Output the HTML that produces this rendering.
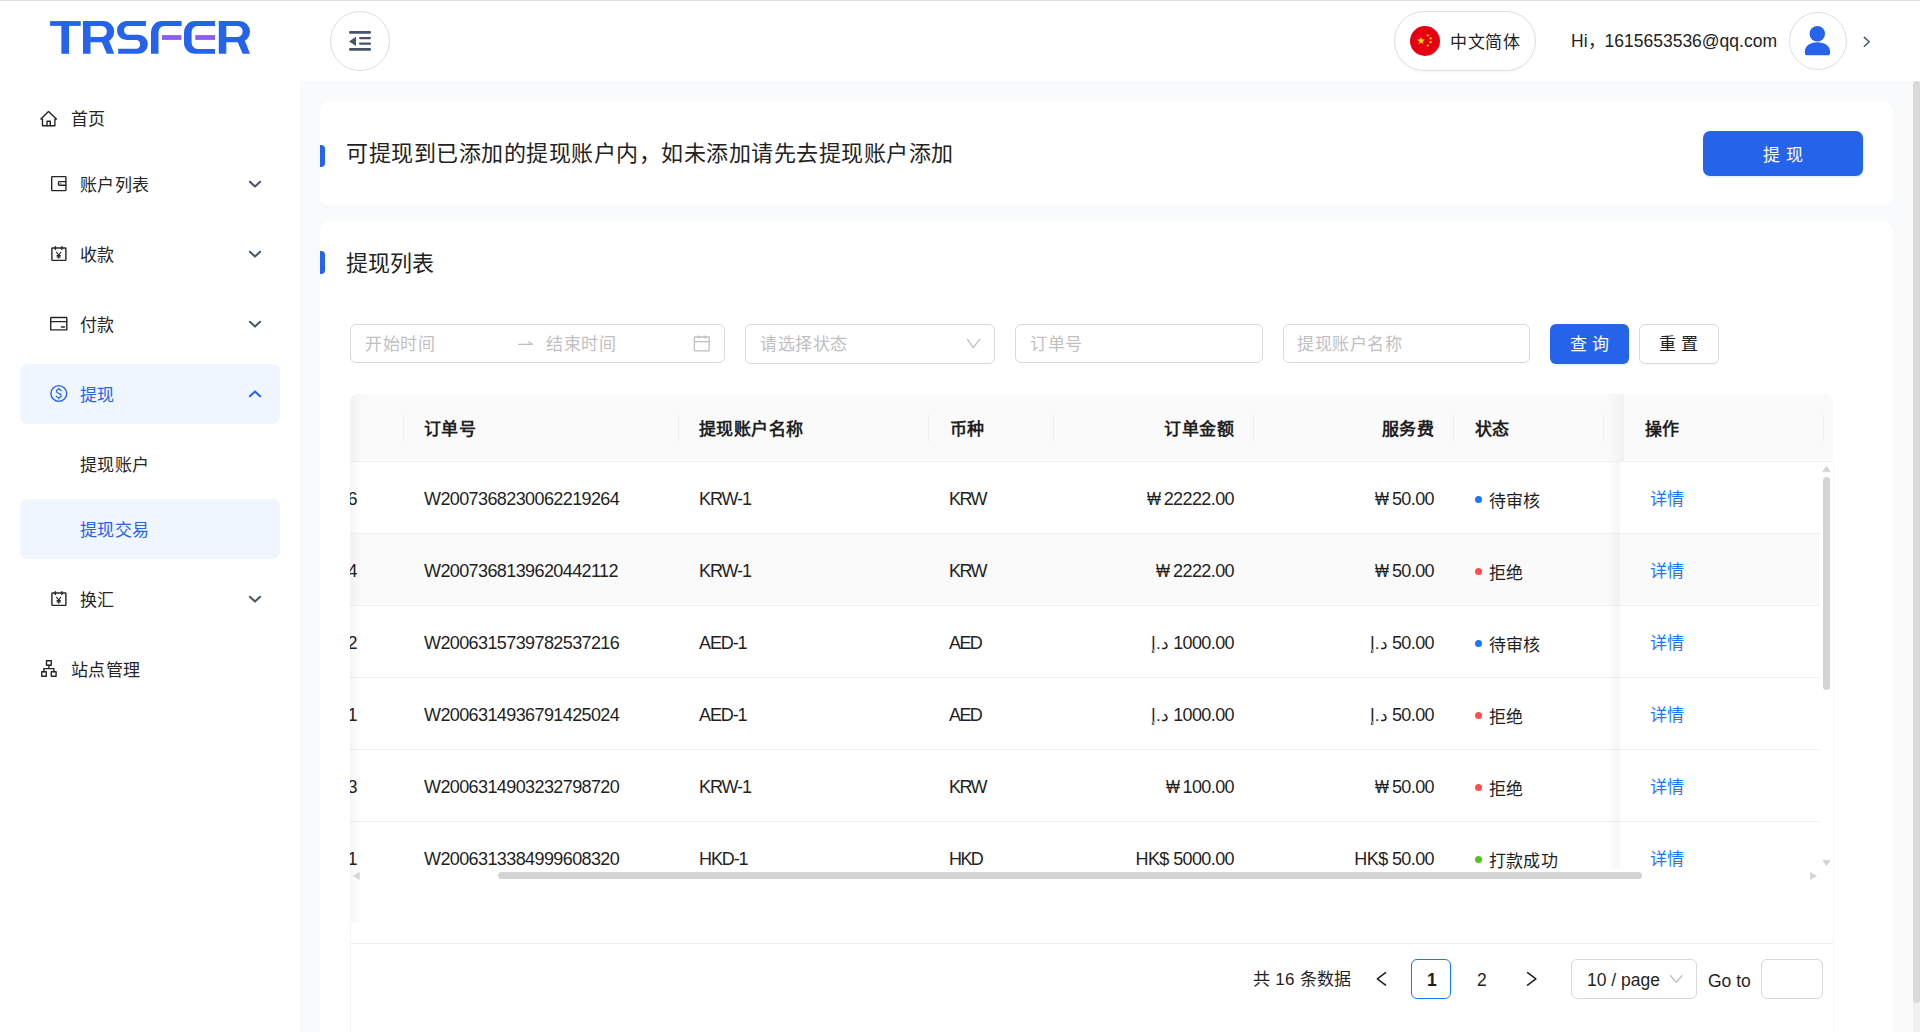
<!DOCTYPE html>
<html lang="zh-CN">
<head>
<meta charset="utf-8">
<title>TRSFER</title>
<style>
*{box-sizing:border-box;margin:0;padding:0}
html,body{width:1920px;height:1032px;overflow:hidden;background:#fff}
body{position:relative;font-family:"Liberation Sans",sans-serif;color:#1f1f1f}
.abs{position:absolute}
.t{position:absolute;white-space:nowrap;line-height:1}
.th{letter-spacing:0.4px;font-size:17px;font-weight:bold;color:#1f1f1f}
.td{font-size:18px;letter-spacing:-0.6px;color:#1f1f1f}
.w{display:inline-block;letter-spacing:0;transform:scaleX(0.82);transform-origin:right center;margin-right:-1.5px}
.ar{font-size:17px;letter-spacing:0;unicode-bidi:isolate;display:inline-block}
.num{display:inline-block}
.tc{font-size:17px;letter-spacing:0.2px;color:#1f1f1f}
</style>
</head>
<body>
<!-- top line -->
<div class="abs" style="left:0;top:0;width:1920px;height:1px;background:#dfe1dd"></div>

<!-- logo -->
<svg class="abs" style="left:0;top:0" width="300" height="80" viewBox="0 0 300 80">
  <g fill="#2563eb">
    <rect x="50.1" y="21.1" width="30.6" height="4.8"/>
    <rect x="61.4" y="21.1" width="7.6" height="32.7"/>
    <path fill-rule="evenodd" d="M83,21.1 H103.7 A10.5,10.6 0 0 1 103.7,42.3 H90.5 V53.8 H83 Z M90.5,25.9 H102 A4.8,5.55 0 0 1 102,37 H90.5 Z"/>
    <path d="M101.8,42 L109,40.5 L114.2,53.8 L106.8,53.8 Z"/>
    <path d="M145.9,21.1 H126.5 A9.5,9.4 0 0 0 126.5,39.9 H136.3 A3.9,4.45 0 0 1 136.3,48.8 H118.2 V53.8 H138.5 A9.3,9.5 0 0 0 138.5,34.8 H128 A4,4.45 0 0 1 128,25.9 H145.9 Z"/>
    <path d="M151,53.8 V32.4 A10.7,11.3 0 0 1 161.7,21.1 H181.6 V25.9 H164.2 A5.7,6.5 0 0 0 158.5,32.4 V53.8 Z"/>
    <path d="M215,21.1 H194.7 A10.7,11.3 0 0 0 184,32.4 V42.5 A10.7,11.3 0 0 0 194.7,53.8 H215 V49 H197.3 A5.7,6.5 0 0 1 191.6,42.5 V32.4 A5.7,6.5 0 0 1 197.3,25.9 H215 Z"/>
    <g transform="translate(135.8,0)">
    <path fill-rule="evenodd" d="M83,21.1 H103.7 A10.5,10.6 0 0 1 103.7,42.3 H90.5 V53.8 H83 Z M90.5,25.9 H102 A4.8,5.55 0 0 1 102,37 H90.5 Z"/>
    <path d="M101.8,42 L109,40.5 L114.2,53.8 L106.8,53.8 Z"/>
    </g>
  </g>
  <g fill="#8b5cf6">
    <rect x="162" y="35.1" width="19.4" height="4.8"/>
    <rect x="195.3" y="35.1" width="19.7" height="4.8"/>
  </g>
</svg>

<!-- collapse button -->
<div class="abs" style="left:330px;top:11px;width:60px;height:60px;border:1px solid #d8e0e8;border-radius:50%"></div>
<svg class="abs" style="left:330px;top:11px" width="60" height="60" viewBox="0 0 60 60">
  <g fill="#475569">
    <rect x="19" y="20" width="22" height="2.7" rx="1.3"/>
    <rect x="29" y="26" width="12" height="2.2" rx="1.1"/>
    <rect x="29" y="31.6" width="12" height="2.2" rx="1.1"/>
    <rect x="19" y="37" width="22" height="2.7" rx="1.3"/>
    <path d="M19,30.4 L26,25.8 L26,35 Z"/>
  </g>
</svg>

<!-- language pill -->
<div class="abs" style="left:1394px;top:11px;width:142px;height:60px;border:1px solid #d8e0e8;border-radius:30px;box-shadow:0 2px 3px rgba(0,0,0,0.03)"></div>
<svg class="abs" style="left:1410px;top:26px" width="30" height="30" viewBox="0 0 30 30">
  <circle cx="15" cy="15" r="15" fill="#e60012"/>
  <path fill="#ffde00" d="M10.9,10.7 L11.9,13.5 L14.9,13.6 L12.5,15.4 L13.4,18.3 L10.9,16.6 L8.4,18.3 L9.3,15.4 L6.9,13.6 L9.9,13.5 Z"/>
  <circle cx="17.8" cy="9.4" r="1.1" fill="#ffde00"/>
  <circle cx="20.6" cy="12.4" r="1.1" fill="#ffde00"/>
  <circle cx="20.6" cy="16.2" r="1.1" fill="#ffde00"/>
  <circle cx="17.8" cy="19.6" r="1.1" fill="#ffde00"/>
</svg>
<div class="t" style="left:1450px;top:34px;font-size:17px;letter-spacing:0.5px;color:#222">中文简体</div>

<!-- user -->
<div class="t" style="left:1571px;top:32.8px;font-size:17.5px;color:#222">Hi，1615653536@qq.com</div>
<div class="abs" style="left:1789px;top:12px;width:58px;height:58px;border:1px solid #d8e0e8;border-radius:50%"></div>
<svg class="abs" style="left:1789px;top:12px" width="58" height="58" viewBox="0 0 58 58">
  <circle cx="28.3" cy="21.7" r="7.7" fill="#2563eb"/>
  <path fill="#2563eb" d="M15.8,40 C15.8,33.6 21.3,30.2 28.4,30.2 C35.5,30.2 41.1,33.6 41.1,40 L41.1,41 C41.1,42.4 40,43.3 38.6,43.3 L18.3,43.3 C16.9,43.3 15.8,42.4 15.8,41 Z"/>
</svg>
<svg class="abs" style="left:1860px;top:34px" width="14" height="14" viewBox="0 0 14 14">
  <path d="M4.3,3.4 L9.2,7.8 L4.3,12.2" fill="none" stroke="#475569" stroke-width="1.5" stroke-linecap="round" stroke-linejoin="round"/>
</svg>

<!-- SIDEBAR placeholder -->

<svg class="abs" style="left:0;top:81px" width="300" height="620" viewBox="0 81 300 620">
  <g fill="none" stroke="#262626" stroke-width="1.4" stroke-linejoin="round" stroke-linecap="round">
    <!-- home -->
    <path d="M40.9,119.1 L48.5,111.4 L56.4,119.1 L54.9,119.1 L54.9,125.7 L42.5,125.7 L42.5,119.1 Z"/>
    <path d="M47,125.7 V121.2 H50.3 V125.7"/>
    <!-- wallet -->
    <rect x="51.7" y="176.6" width="14.2" height="14" rx="0.6"/>
    <path d="M65.9,181.6 H59.3 Q58.5,181.6 58.5,182.4 V184.6 Q58.5,185.3 59.3,185.3 H65.9"/>
    <circle cx="60.8" cy="183.4" r="0.5" fill="#262626" stroke="none"/>
    <!-- calendar yen 1 -->
    <rect x="51.9" y="248" width="14" height="12.4" rx="0.6"/>
    <path d="M55.4,246.6 V249.4 M61.9,246.6 V249.4"/>
    <path d="M56.6,252.3 L58.7,255 L60.8,252.3 M58.7,255 V258.3 M57,255.6 H60.4 M57,257 H60.4" stroke-width="1.1"/>
    <!-- card -->
    <rect x="50.7" y="317.5" width="16.1" height="12.4" rx="0.5"/>
    <path d="M50.7,321.6 H66.8"/>
    <path d="M61.5,327 H64.5" stroke-width="1.3"/>
    <!-- calendar yen 2 -->
    <rect x="51.9" y="593" width="14" height="12.4" rx="0.6"/>
    <path d="M55.4,591.6 V594.4 M61.9,591.6 V594.4"/>
    <path d="M56.6,597.3 L58.7,600 L60.8,597.3 M58.7,600 V603.3 M57,600.6 H60.4 M57,602 H60.4" stroke-width="1.1"/>
    <!-- sitemap -->
    <rect x="46.5" y="660.7" width="4.8" height="4.6"/>
    <rect x="41.7" y="671.8" width="4.6" height="4.4"/>
    <rect x="51.3" y="671.8" width="4.8" height="4.4"/>
    <path d="M48.9,665.3 V668.6 M43.9,671.8 V668.6 H53.9 V671.8"/>
  </g>
  <!-- chevrons -->
  <g fill="none" stroke="#475569" stroke-width="2" stroke-linecap="round" stroke-linejoin="round">
    <path d="M249.9,181.8 L255,186.6 L260.1,181.8"/>
    <path d="M249.9,251.8 L255,256.6 L260.1,251.8"/>
    <path d="M249.9,321.8 L255,326.6 L260.1,321.8"/>
    <path d="M249.9,596.8 L255,601.6 L260.1,596.8"/>
  </g>
</svg>
<div class="abs" style="left:20px;top:364px;width:260px;height:60px;background:#eff6ff;border-radius:8px"></div>
<div class="abs" style="left:20px;top:499px;width:260px;height:60px;background:#eff6ff;border-radius:8px"></div>
<svg class="abs" style="left:0;top:360px" width="300" height="70" viewBox="0 360 300 70">
  <g fill="none" stroke="#2563eb" stroke-width="1.4" stroke-linecap="round" stroke-linejoin="round">
    <circle cx="58.8" cy="393.5" r="7.9"/>
    <path d="M61,390.6 Q60.3,389.3 58.8,389.3 Q56.5,389.3 56.5,391.2 Q56.5,392.8 58.8,393.3 Q61.2,393.9 61.2,395.6 Q61.2,397.5 58.8,397.5 Q57,397.5 56.3,396.2 M58.8,388 V389.3 M58.8,397.5 V398.9" stroke-width="1.2"/>
    <path d="M249.9,396.2 L255,391.4 L260.1,396.2" stroke-width="2"/>
  </g>
</svg>
<div class="t" style="left:71px;top:111px;font-size:17px;letter-spacing:0.4px;color:#262626">首页</div>
<div class="t" style="left:80px;top:177px;font-size:17px;letter-spacing:0.4px;color:#262626">账户列表</div>
<div class="t" style="left:80px;top:247px;font-size:17px;letter-spacing:0.4px;color:#262626">收款</div>
<div class="t" style="left:80px;top:317px;font-size:17px;letter-spacing:0.4px;color:#262626">付款</div>
<div class="t" style="left:80px;top:387px;font-size:17px;letter-spacing:0.4px;color:#2563eb">提现</div>
<div class="t" style="left:80px;top:457px;font-size:17px;letter-spacing:0.4px;color:#262626">提现账户</div>
<div class="t" style="left:80px;top:522px;font-size:17px;letter-spacing:0.4px;color:#2563eb">提现交易</div>
<div class="t" style="left:80px;top:592px;font-size:17px;letter-spacing:0.4px;color:#262626">换汇</div>
<div class="t" style="left:71px;top:662px;font-size:17px;letter-spacing:0.4px;color:#262626">站点管理</div>


<!-- MAIN -->
<div class="abs" style="left:300px;top:81px;width:1613px;height:951px;background:#f9fafb"></div>
<div class="abs" style="left:1913px;top:81px;width:7px;height:951px;background:#f1f1f1"></div>
<div class="abs" style="left:1913px;top:81px;width:7px;height:922px;background:#d9d9d9;border-radius:4px"></div>

<!-- card 1 -->
<div class="abs" style="left:320px;top:101px;width:1573px;height:105px;background:#fff;border-radius:10px"></div>
<div class="abs" style="left:320px;top:145px;width:5px;height:22px;background:#2563eb;border-radius:0 4px 4px 0"></div>
<div class="t" style="left:346px;top:143px;font-size:22px;letter-spacing:0.5px;color:#222">可提现到已添加的提现账户内，如未添加请先去提现账户添加</div>
<div class="abs" style="left:1703px;top:131px;width:160px;height:45px;background:#2563eb;border-radius:7px;box-shadow:0 2px 0 rgba(5,145,255,0.1)"></div>
<div class="t" style="left:1763px;top:146.5px;font-size:17px;color:#fff;letter-spacing:6px">提现</div>

<!-- card 2 -->
<div class="abs" style="left:320px;top:221px;width:1573px;height:830px;background:#fff;border-radius:10px"></div>
<div class="abs" style="left:320px;top:251px;width:5px;height:23px;background:#2563eb;border-radius:0 4px 4px 0"></div>
<div class="t" style="left:346px;top:253px;font-size:22px;color:#222">提现列表</div>


<!-- filters -->
<div class="abs" style="left:350px;top:324px;width:375px;height:39px;border:1px solid #d9d9d9;border-radius:6px;background:#fff"></div>
<div class="t" style="left:365px;top:336px;font-size:17px;letter-spacing:0.6px;color:#bfbfbf">开始时间</div>
<svg class="abs" style="left:515px;top:336px" width="20" height="16" viewBox="0 0 20 16">
  <path d="M3.7,8.3 H17.5 L13.3,5.7" fill="none" stroke="#bfbfbf" stroke-width="1.3" stroke-linecap="round" stroke-linejoin="round"/>
</svg>
<div class="t" style="left:546px;top:336px;font-size:17px;letter-spacing:0.6px;color:#bfbfbf">结束时间</div>
<svg class="abs" style="left:690px;top:332px" width="24" height="24" viewBox="0 0 24 24">
  <g fill="none" stroke="#bfbfbf" stroke-width="1.3">
    <rect x="4.4" y="5" width="14.8" height="13.8" rx="0.5"/>
    <path d="M4.4,9.6 H19.2 M8.5,3.6 V6.6 M15.1,3.6 V6.6"/>
  </g>
</svg>
<div class="abs" style="left:745px;top:324px;width:250px;height:40px;border:1px solid #d9d9d9;border-radius:6px;background:#fff"></div>
<div class="t" style="left:760px;top:336px;font-size:17px;letter-spacing:0.6px;color:#bfbfbf">请选择状态</div>
<svg class="abs" style="left:962px;top:334px" width="22" height="18" viewBox="0 0 22 18">
  <path d="M5.5,5.3 L11.3,13.6 L17.6,5.3" fill="none" stroke="#bfbfbf" stroke-width="1.3" stroke-linecap="round" stroke-linejoin="round"/>
</svg>
<div class="abs" style="left:1015px;top:324px;width:248px;height:39px;border:1px solid #d9d9d9;border-radius:6px;background:#fff"></div>
<div class="t" style="left:1030px;top:336px;font-size:17px;letter-spacing:0.6px;color:#bfbfbf">订单号</div>
<div class="abs" style="left:1283px;top:324px;width:247px;height:39px;border:1px solid #d9d9d9;border-radius:6px;background:#fff"></div>
<div class="t" style="left:1297px;top:336px;font-size:17px;letter-spacing:0.6px;color:#bfbfbf">提现账户名称</div>
<div class="abs" style="left:1550px;top:324px;width:79px;height:40px;background:#2563eb;border-radius:6px;box-shadow:0 2px 0 rgba(5,145,255,0.1)"></div>
<div class="t" style="left:1570px;top:336px;font-size:17px;color:#fff;letter-spacing:5px">查询</div>
<div class="abs" style="left:1639px;top:324px;width:80px;height:40px;border:1px solid #d9d9d9;border-radius:6px;background:#fff;box-shadow:0 2px 0 rgba(0,0,0,0.02)"></div>
<div class="t" style="left:1659px;top:336px;font-size:17px;color:#1f1f1f;letter-spacing:5px">重置</div>

<!-- TABLE START -->
<div class="abs" style="left:350px;top:394px;width:1483px;height:68px;background:#fafafa;border-radius:8px 8px 0 0;border-bottom:1px solid #f0f0f0"></div>
<div class="abs" style="left:403px;top:414px;width:1px;height:28px;background:#f0f0f0"></div>
<div class="abs" style="left:678px;top:414px;width:1px;height:28px;background:#f0f0f0"></div>
<div class="abs" style="left:928px;top:414px;width:1px;height:28px;background:#f0f0f0"></div>
<div class="abs" style="left:1053px;top:414px;width:1px;height:28px;background:#f0f0f0"></div>
<div class="abs" style="left:1253px;top:414px;width:1px;height:28px;background:#f0f0f0"></div>
<div class="abs" style="left:1453px;top:414px;width:1px;height:28px;background:#f0f0f0"></div>
<div class="abs" style="left:1603px;top:414px;width:1px;height:28px;background:#f0f0f0"></div>
<div class="abs" style="left:1823px;top:414px;width:1px;height:28px;background:#f0f0f0"></div>
<div class="t th" style="left:424px;top:420.5px">订单号</div>
<div class="t th" style="left:699px;top:420.5px">提现账户名称</div>
<div class="t th" style="left:950px;top:420.5px">币种</div>
<div class="t th" style="right:686px;top:420.5px">订单金额</div>
<div class="t th" style="right:486px;top:420.5px">服务费</div>
<div class="t th" style="left:1475px;top:420.5px">状态</div>
<div class="t th" style="left:1645px;top:420.5px">操作</div>
<div class="abs" style="left:350px;top:462px;width:1473px;height:407px;overflow:hidden">
<div class="abs" style="left:0;top:0px;width:1470px;height:72px;background:#fff;border-bottom:1px solid #f0f0f0"></div>
<div class="t td" style="right:1466px;top:28px">6</div>
<div class="t td" style="left:74px;top:28px">W2007368230062219264</div>
<div class="t td" style="left:349px;top:28px;letter-spacing:-1.1px">KRW-1</div>
<div class="t td" style="left:599px;top:28px;letter-spacing:-1.6px">KRW</div>
<div class="t td" style="right:589px;top:28px"><span class="w">₩</span> 22222.00</div>
<div class="t td" style="right:389px;top:28px"><span class="w">₩</span> 50.00</div>
<div class="abs" style="left:1124.5px;top:33.5px;width:7px;height:7px;border-radius:50%;background:#1677ff"></div>
<div class="t tc" style="left:1139px;top:30.5px">待审核</div>
<div class="abs" style="left:1270px;top:0px;width:200px;height:72px;background:#fff;border-bottom:1px solid #f0f0f0"></div>
<div class="t tc" style="left:1300px;top:29px;color:#1677ff">详情</div>
<div class="abs" style="left:0;top:72px;width:1470px;height:72px;background:#fafafa;border-bottom:1px solid #f0f0f0"></div>
<div class="t td" style="right:1466px;top:100px">4</div>
<div class="t td" style="left:74px;top:100px">W2007368139620442112</div>
<div class="t td" style="left:349px;top:100px;letter-spacing:-1.1px">KRW-1</div>
<div class="t td" style="left:599px;top:100px;letter-spacing:-1.6px">KRW</div>
<div class="t td" style="right:589px;top:100px"><span class="w">₩</span> 2222.00</div>
<div class="t td" style="right:389px;top:100px"><span class="w">₩</span> 50.00</div>
<div class="abs" style="left:1124.5px;top:105.5px;width:7px;height:7px;border-radius:50%;background:#ff4d4f"></div>
<div class="t tc" style="left:1139px;top:102.5px">拒绝</div>
<div class="abs" style="left:1270px;top:72px;width:200px;height:72px;background:#fafafa;border-bottom:1px solid #f0f0f0"></div>
<div class="t tc" style="left:1300px;top:101px;color:#1677ff">详情</div>
<div class="abs" style="left:0;top:144px;width:1470px;height:72px;background:#fff;border-bottom:1px solid #f0f0f0"></div>
<div class="t td" style="right:1466px;top:172px">2</div>
<div class="t td" style="left:74px;top:172px">W2006315739782537216</div>
<div class="t td" style="left:349px;top:172px;letter-spacing:-1.1px">AED-1</div>
<div class="t td" style="left:599px;top:172px;letter-spacing:-1.6px">AED</div>
<div class="t td" style="right:589px;top:172px"><span class="ar">د.إ</span> <span class="num">1000.00</span></div>
<div class="t td" style="right:389px;top:172px"><span class="ar">د.إ</span> <span class="num">50.00</span></div>
<div class="abs" style="left:1124.5px;top:177.5px;width:7px;height:7px;border-radius:50%;background:#1677ff"></div>
<div class="t tc" style="left:1139px;top:174.5px">待审核</div>
<div class="abs" style="left:1270px;top:144px;width:200px;height:72px;background:#fff;border-bottom:1px solid #f0f0f0"></div>
<div class="t tc" style="left:1300px;top:173px;color:#1677ff">详情</div>
<div class="abs" style="left:0;top:216px;width:1470px;height:72px;background:#fff;border-bottom:1px solid #f0f0f0"></div>
<div class="t td" style="right:1466px;top:244px">1</div>
<div class="t td" style="left:74px;top:244px">W2006314936791425024</div>
<div class="t td" style="left:349px;top:244px;letter-spacing:-1.1px">AED-1</div>
<div class="t td" style="left:599px;top:244px;letter-spacing:-1.6px">AED</div>
<div class="t td" style="right:589px;top:244px"><span class="ar">د.إ</span> <span class="num">1000.00</span></div>
<div class="t td" style="right:389px;top:244px"><span class="ar">د.إ</span> <span class="num">50.00</span></div>
<div class="abs" style="left:1124.5px;top:249.5px;width:7px;height:7px;border-radius:50%;background:#ff4d4f"></div>
<div class="t tc" style="left:1139px;top:246.5px">拒绝</div>
<div class="abs" style="left:1270px;top:216px;width:200px;height:72px;background:#fff;border-bottom:1px solid #f0f0f0"></div>
<div class="t tc" style="left:1300px;top:245px;color:#1677ff">详情</div>
<div class="abs" style="left:0;top:288px;width:1470px;height:72px;background:#fff;border-bottom:1px solid #f0f0f0"></div>
<div class="t td" style="right:1466px;top:316px">3</div>
<div class="t td" style="left:74px;top:316px">W2006314903232798720</div>
<div class="t td" style="left:349px;top:316px;letter-spacing:-1.1px">KRW-1</div>
<div class="t td" style="left:599px;top:316px;letter-spacing:-1.6px">KRW</div>
<div class="t td" style="right:589px;top:316px"><span class="w">₩</span> 100.00</div>
<div class="t td" style="right:389px;top:316px"><span class="w">₩</span> 50.00</div>
<div class="abs" style="left:1124.5px;top:321.5px;width:7px;height:7px;border-radius:50%;background:#ff4d4f"></div>
<div class="t tc" style="left:1139px;top:318.5px">拒绝</div>
<div class="abs" style="left:1270px;top:288px;width:200px;height:72px;background:#fff;border-bottom:1px solid #f0f0f0"></div>
<div class="t tc" style="left:1300px;top:317px;color:#1677ff">详情</div>
<div class="abs" style="left:0;top:360px;width:1470px;height:72px;background:#fff;border-bottom:1px solid #f0f0f0"></div>
<div class="t td" style="right:1466px;top:388px">1</div>
<div class="t td" style="left:74px;top:388px">W2006313384999608320</div>
<div class="t td" style="left:349px;top:388px;letter-spacing:-1.1px">HKD-1</div>
<div class="t td" style="left:599px;top:388px;letter-spacing:-1.6px">HKD</div>
<div class="t td" style="right:589px;top:388px">HK$ 5000.00</div>
<div class="t td" style="right:389px;top:388px">HK$ 50.00</div>
<div class="abs" style="left:1124.5px;top:393.5px;width:7px;height:7px;border-radius:50%;background:#52c41a"></div>
<div class="t tc" style="left:1139px;top:390.5px">打款成功</div>
<div class="abs" style="left:1270px;top:360px;width:200px;height:72px;background:#fff;border-bottom:1px solid #f0f0f0"></div>
<div class="t tc" style="left:1300px;top:389px;color:#1677ff">详情</div>
</div>
<div class="abs" style="left:1608px;top:394px;width:16px;height:67px;background:linear-gradient(to right,rgba(0,0,0,0),rgba(0,0,0,0.035))"></div>
<div class="abs" style="left:1606px;top:462px;width:14px;height:407px;background:linear-gradient(to right,rgba(0,0,0,0),rgba(0,0,0,0.035))"></div>
<div class="abs" style="left:350px;top:394px;width:12px;height:529px;border-top-left-radius:8px;background:linear-gradient(to left,rgba(0,0,0,0),rgba(0,0,0,0.035))"></div>
<svg class="abs" style="left:1820px;top:462px" width="14" height="420" viewBox="0 0 14 420"><path d="M2.9,9.6 L6.5,4.2 L10.1,9.6 Z M2.9,398.4 L6.5,403.5 L10.1,398.4 Z" fill="#d4d4d4" stroke="#d4d4d4" stroke-width="0.8" stroke-linejoin="round"/></svg>
<div class="abs" style="left:1823px;top:477px;width:7px;height:213px;background:#d4d4d4;border-radius:4px"></div>
<svg class="abs" style="left:350px;top:866px" width="1480" height="18" viewBox="0 0 1480 18"><path d="M3.6,9.9 L9.3,6.4 L9.3,13.4 Z M1460.5,6.4 L1466.3,9.9 L1460.5,13.4 Z" fill="#d4d4d4" stroke="#d4d4d4" stroke-width="0.8" stroke-linejoin="round"/></svg>
<div class="abs" style="left:498px;top:872px;width:1144px;height:7px;background:#d4d4d4;border-radius:4px"></div>
<div class="abs" style="left:350px;top:923px;width:1px;height:109px;background:#f5f5f5"></div>
<div class="abs" style="left:1833px;top:462px;width:1px;height:570px;background:#f7f7f7"></div>
<div class="abs" style="left:350px;top:943px;width:1483px;height:1px;background:#eeeef5"></div>
<!-- TABLE END -->
<!-- pager -->
<div class="t" style="left:1253px;top:970.5px;font-size:17px;letter-spacing:0.3px;color:#1f1f1f">共 16 条数据</div>
<svg class="abs" style="left:1370px;top:968px" width="180" height="22" viewBox="0 0 180 22">
  <g fill="none" stroke="#1f1f1f" stroke-width="1.5" stroke-linecap="round" stroke-linejoin="round">
    <path d="M15.6,4.6 L7.3,10.9 L15.6,17.1"/>
    <path d="M157.6,4.6 L165.9,10.9 L157.6,17.1"/>
  </g>
</svg>
<div class="abs" style="left:1411px;top:959px;width:40px;height:40px;border:1px solid #1677ff;border-radius:6px;background:#fff"></div>
<div class="t" style="left:1427px;top:972px;font-size:17.5px;font-weight:bold;color:#1f1f1f">1</div>
<div class="t" style="left:1477px;top:972px;font-size:17.5px;color:#1f1f1f">2</div>
<div class="abs" style="left:1571px;top:959px;width:126px;height:40px;border:1px solid #d9d9d9;border-radius:6px;background:#fff"></div>
<div class="t" style="left:1587px;top:972px;font-size:17.5px;color:#1f1f1f">10 / page</div>
<svg class="abs" style="left:1666px;top:969.5px" width="20" height="20" viewBox="0 0 20 20">
  <path d="M4.6,5.7 L10.3,12.2 L16,5.7" fill="none" stroke="#bfbfbf" stroke-width="1.3" stroke-linecap="round" stroke-linejoin="round"/>
</svg>
<div class="t" style="left:1708px;top:973px;font-size:17.5px;color:#1f1f1f">Go to</div>
<div class="abs" style="left:1761px;top:959px;width:62px;height:40px;border:1px solid #d9d9d9;border-radius:6px;background:#fff"></div>

</body>
</html>
